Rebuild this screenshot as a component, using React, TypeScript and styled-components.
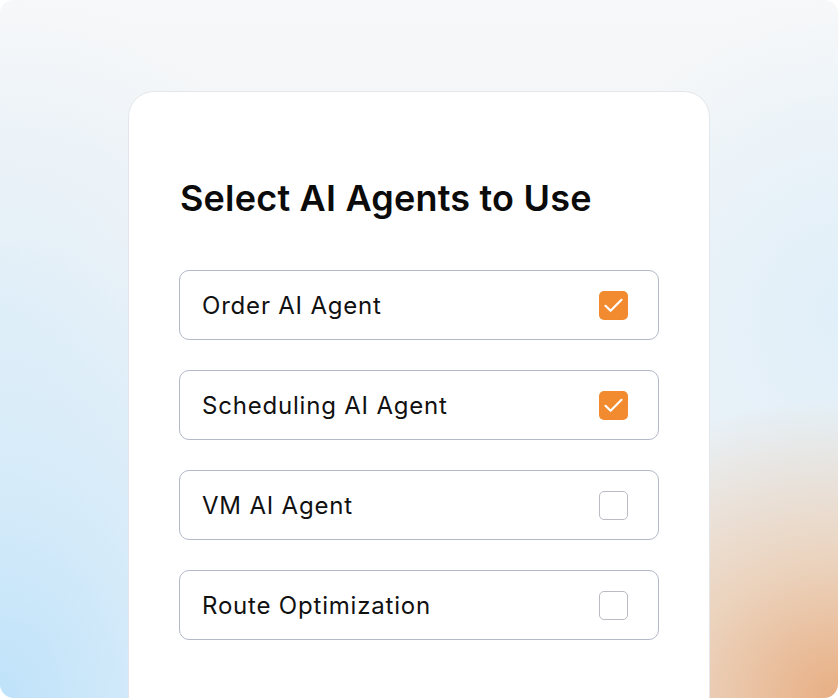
import React from "react";
import styled, { createGlobalStyle } from "styled-components";

const GlobalStyle = createGlobalStyle`
  html, body {
    margin: 0;
    padding: 0;
    background: #fff;
  }
  body {
    font-family: "Inter", "Liberation Sans", sans-serif;
    -webkit-font-smoothing: antialiased;
  }
`;

type Agent = { name: string; checked: boolean };

const AGENTS: Agent[] = [
  { name: "Order AI Agent", checked: true },
  { name: "Scheduling AI Agent", checked: true },
  { name: "VM AI Agent", checked: false },
  { name: "Route Optimization", checked: false }
];

const CheckIcon = () => (
  <svg width="29" height="29" viewBox="0 0 29 29" fill="none">
    <path
      d="M6.5 14.8 L11.6 19.8 L22.5 8.8"
      stroke="#fff"
      strokeWidth="2.2"
      strokeLinecap="round"
      strokeLinejoin="round"
    />
  </svg>
);

export default function App() {
  return (
    <>
      <GlobalStyle />
      <Page>
        <Card>
          <Title>Select AI Agents to Use</Title>
          <List>
            {AGENTS.map((a) => (
              <Row key={a.name}>
                <Label>{a.name}</Label>
                <Box checked={a.checked}>{a.checked && <CheckIcon />}</Box>
              </Row>
            ))}
          </List>
        </Card>
      </Page>
    </>
  );
}

const Page = styled.div`
  width: 838px;
  height: 698px;
  border-radius: 14px;
  overflow: hidden;
  box-sizing: border-box;
  padding: 91px 128px 0 128px;
  background:
    radial-gradient(ellipse 340px 300px at 100% 100%, #e8ae82 0%, rgba(236, 190, 150, 0.6) 45%, rgba(240, 220, 205, 0) 100%),
    radial-gradient(ellipse 360px 460px at 0% 100%, #bfe2fa 0%, rgba(205, 232, 250, 0.7) 45%, rgba(225, 240, 250, 0) 100%),
    radial-gradient(ellipse 260px 320px at 100% 45%, #e0eff9 0%, rgba(230, 242, 250, 0) 100%),
    radial-gradient(ellipse 300px 320px at 0% 45%, #e2eff8 0%, rgba(230, 242, 250, 0) 100%),
    linear-gradient(180deg, #f7f8f9 0%, #f0f4f7 40%, #eaf1f7 100%);
`;

const Card = styled.div`
  width: 582px;
  height: 680px;
  box-sizing: border-box;
  background: #fff;
  border: 1px solid #e3e6ea;
  border-radius: 26px;
  padding: 84px 50px 0 50px;
`;

const Title = styled.h1`
  margin: 0 0 50px 1px;
  font-family: "Inter", "Liberation Sans", sans-serif;
  font-weight: 600;
  font-size: 36px;
  line-height: 44px;
  letter-spacing: 0.2px;
  color: #0b0b0b;
`;

const List = styled.div`
  display: flex;
  flex-direction: column;
  gap: 30px;
`;

const Row = styled.div`
  height: 70px;
  box-sizing: border-box;
  display: flex;
  align-items: center;
  justify-content: space-between;
  padding: 0 30px 0 22px;
  border: 1px solid #b4b9c8;
  border-radius: 10px;
  background: #fff;
`;

const Label = styled.span`
  font-family: "Inter", "Liberation Sans", sans-serif;
  font-size: 24px;
  font-weight: 400;
  color: #111;
  letter-spacing: 0.8px;
`;

const Box = styled.span<{ checked: boolean }>`
  width: 29px;
  height: 29px;
  box-sizing: border-box;
  border-radius: 5px;
  display: flex;
  align-items: center;
  justify-content: center;
  background: ${(p) => (p.checked ? "#f28a2f" : "#fff")};
  border: ${(p) => (p.checked ? "none" : "1.5px solid #b9bcc3")};
`;
